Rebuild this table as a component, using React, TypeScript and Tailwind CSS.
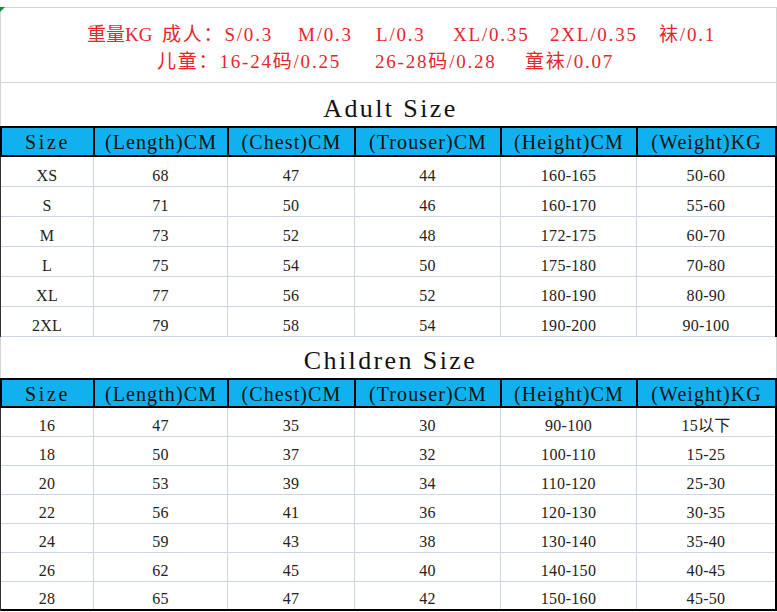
import React from "react";

const adult = [
  ["XS", "68", "47", "44", "160-165", "50-60"],
  ["S", "71", "50", "46", "160-170", "55-60"],
  ["M", "73", "52", "48", "172-175", "60-70"],
  ["L", "75", "54", "50", "175-180", "70-80"],
  ["XL", "77", "56", "52", "180-190", "80-90"],
  ["2XL", "79", "58", "54", "190-200", "90-100"],
];

const children = [
  ["16", "47", "35", "30", "90-100", "15以下"],
  ["18", "50", "37", "32", "100-110", "15-25"],
  ["20", "53", "39", "34", "110-120", "25-30"],
  ["22", "56", "41", "36", "120-130", "30-35"],
  ["24", "59", "43", "38", "130-140", "35-40"],
  ["26", "62", "45", "40", "140-150", "40-45"],
  ["28", "65", "47", "42", "150-160", "45-50"],
];

const heads = ["Size", "(Length)CM", "(Chest)CM", "(Trouser)CM", "(Height)CM", "(Weight)KG"];

const cols = "grid grid-cols-[93px_134px_127px_146px_136px_1fr]";
const serif = { fontFamily: '"Liberation Serif", "Noto Sans CJK SC", serif' };

function Title({ text, h }: { text: string; h: string }) {
  return (
    <div className={`${h} flex items-end justify-center pb-[4px] border-x border-[#d4d4d4] text-[#111] text-[26px] tracking-[2.4px] leading-none`} style={serif}>
      <span className="pl-[4px]">{text}</span>
    </div>
  );
}

function Header({ h }: { h: string }) {
  return (
    <div className={`${cols} ${h} bg-[#10b1ee] border-y-2 border-l-2 border-r-2 border-black`}>
      {heads.map((t, i) => (
        <div
          key={i}
          className={`flex items-center justify-center pt-[1px] text-[20px] text-[#111] leading-none ${i < 5 ? "border-r-2 border-black" : ""} ${i === 0 ? "tracking-[2.7px]" : "tracking-[1.1px]"}`}
          style={serif}
        >
          {t}
        </div>
      ))}
    </div>
  );
}

function Rows({ data, h, last }: { data: string[][]; h: string; last?: boolean }) {
  return (
    <div className="border-l border-l-[#333] border-r-2 border-r-black">
      {data.map((row, r) => (
        <div
          key={r}
          className={`${cols} ${h} ${last && r === data.length - 1 ? "border-b-2 border-black" : "border-b border-[#cdd4e4]"}`}
        >
          {row.map((c, i) => (
            <div
              key={i}
              className={`flex items-end justify-center pb-[2px] text-[16px] leading-none text-[#222] tracking-[0.3px] ${i < 5 ? "border-r border-[#cdd4e4]" : ""}`}
              style={serif}
            >
              {c}
            </div>
          ))}
        </div>
      ))}
    </div>
  );
}

export default function App() {
  const red = "text-[#e6262d]";
  return (
    <main className="w-[777px] min-h-[612px] bg-white pt-[7px] relative">
      <div className="absolute left-0 top-[7px] w-0 h-0 border-t-[5px] border-t-[#1a8a3a] border-r-[5px] border-r-transparent" />

      {/* notes */}
      <div className={`h-[75px] border border-b-0 border-[#d4d4d4] ${red} text-[19px] leading-none pt-[17px]`} style={serif}>
        <div className="flex pl-[86px] whitespace-pre tracking-[1.8px]">
          <span className="w-[75px] tracking-[0px]">重量KG</span>
          <span className="w-[136px]">成人：S/0.3</span>
          <span className="w-[78px]">M/0.3</span>
          <span className="w-[77px]">L/0.3</span>
          <span className="w-[97px]">XL/0.35</span>
          <span className="w-[109px]">2XL/0.35</span>
          <span>袜/0.1</span>
        </div>
        <div className="flex pl-[156px] mt-[8px] whitespace-pre tracking-[1.8px]">
          <span className="w-[218px]">儿童：16-24码/0.25</span>
          <span className="w-[150px]">26-28码/0.28</span>
          <span>童袜/0.07</span>
        </div>
      </div>

      {/* ADULT */}
      <div className="border-t border-[#d4d4d4]">
        <Title text="Adult Size" h="h-[43px]" />
      </div>
      <Header h="h-[31px]" />
      <Rows data={adult} h="h-[30px]" />

      {/* CHILDREN */}
      <Title text="Children Size" h="h-[41px]" />
      <Header h="h-[30px]" />
      <Rows data={children} h="h-[29px]" last />
    </main>
  );
}
